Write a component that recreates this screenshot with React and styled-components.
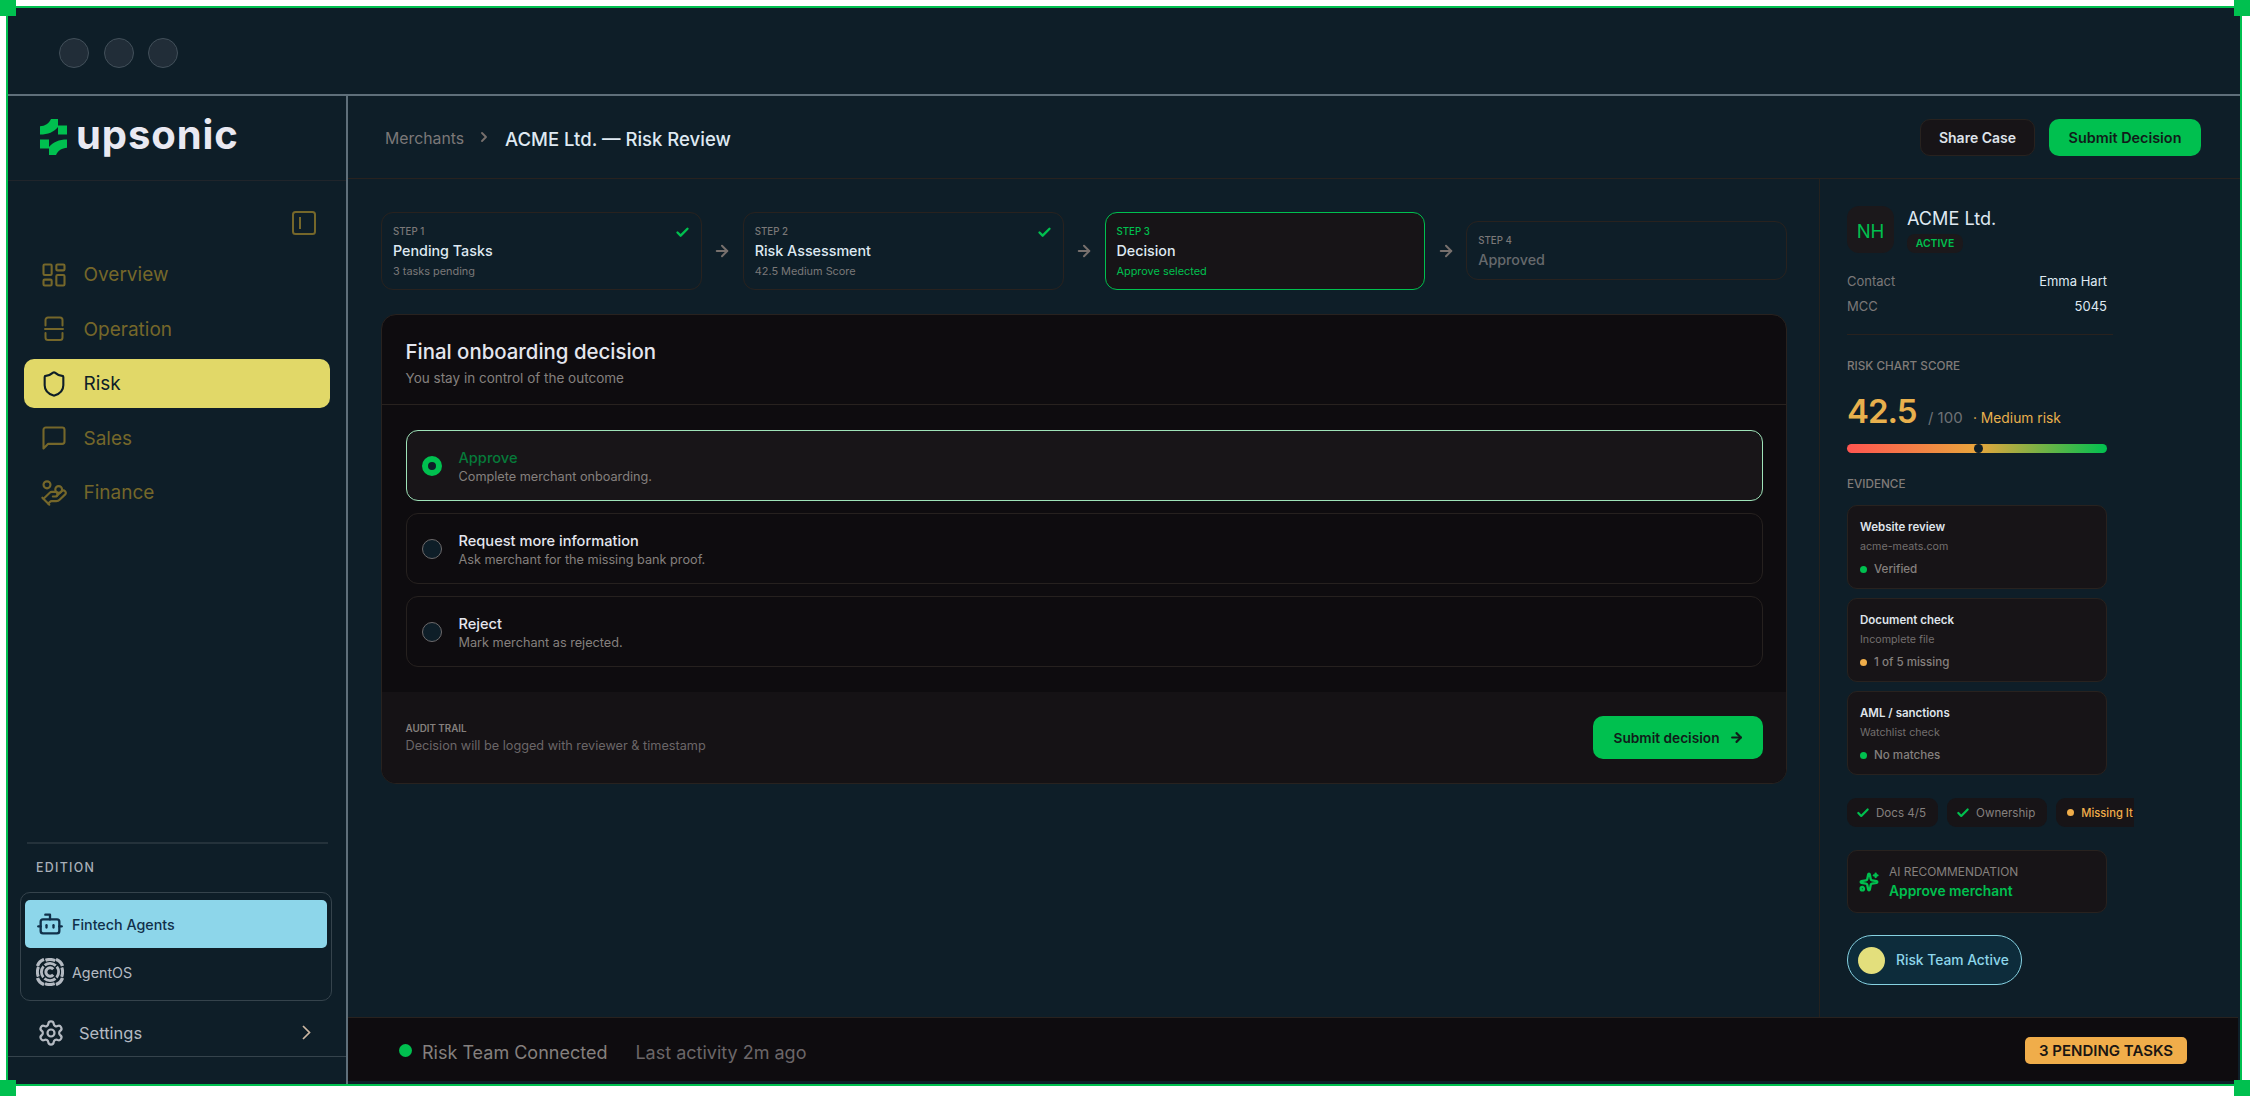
import React, { useState } from "react";
import styled, { createGlobalStyle, css } from "styled-components";
import {
  ArrowRight,
  Bot,
  Check,
  ChevronRight,
  HandCoins,
  LayoutDashboard,
  Settings,
  Shield,
  Sparkles,
} from "lucide-react";

const steps = [
  { label: "STEP 1", title: "Pending Tasks", note: "3 tasks pending", state: "done" },
  { label: "STEP 2", title: "Risk Assessment", note: "42.5 Medium Score", state: "done" },
  { label: "STEP 3", title: "Decision", note: "Approve selected", state: "active" },
  { label: "STEP 4", title: "Approved", state: "next" },
];

const options = [
  { id: "approve", title: "Approve", text: "Complete merchant onboarding." },
  { id: "request", title: "Request more information", text: "Ask merchant for the missing bank proof." },
  { id: "reject", title: "Reject", text: "Mark merchant as rejected." },
];

const evidence = [
  { title: "Website review", source: "acme-meats.com", status: "Verified", color: "#00c04f" },
  { title: "Document check", source: "Incomplete file", status: "1 of 5 missing", color: "#f0ad4a" },
  { title: "AML / sanctions", source: "Watchlist check", status: "No matches", color: "#00c04f" },
];

const OperationIcon = () => (
  <svg width="28" height="28" viewBox="0 0 28 28" fill="none" stroke="currentColor" strokeWidth="2" strokeLinecap="round">
    <path d="M5.5 10.5V5A2.5 2.5 0 0 1 8 2.500h12A2.5 2.5 0 0 1 22.5 5v5.5" />
    <path d="M5 14h18" />
    <path d="M5.5 18v4.500A2.5 2.5 0 0 0 8 25h12a2.5 2.5 0 0 0 2.5-2.5V18" />
  </svg>
);

const SalesIcon = () => (
  <svg width="28" height="28" viewBox="0 0 24 24" fill="none" stroke="currentColor" strokeWidth="1.8" strokeLinejoin="round">
    <path d="M21 15a2 2 0 0 1-2 2H7l-4 4V5a2 2 0 0 1 2-2h14a2 2 0 0 1 2 2z" />
  </svg>
);

// open ring in the middle, broken rings around it
const AgentOsIcon = () => (
  <svg width="28" height="28" viewBox="0 0 28 28" fill="none" stroke="currentColor">
    <path d="M17.2 11.2a4.2 4.2 0 1 0 0 5.600" strokeWidth="3" />
    <circle cx="14" cy="14" r="8.6" strokeWidth="2.8" strokeDasharray="12 1.510" strokeDashoffset="6" />
    <circle cx="14" cy="14" r="12.6" strokeWidth="3" strokeDasharray="10 9.790" strokeDashoffset="5" />
    <path d="M1.500 8C2.500 5 5 2.500 8 1.500M26.500 8C25.500 5 23 2.500 20 1.500M1.500 20c1 3 3.500 5.500 6.500 6.500M26.500 20c-1 3-3.500 5.500-6.500 6.500" strokeWidth="3.400" />
  </svg>
);

const navItems = [
  { name: "Overview", icon: <LayoutDashboard size={28} strokeWidth={1.8} /> },
  { name: "Operation", icon: <OperationIcon /> },
  { name: "Risk", icon: <Shield size={28} strokeWidth={1.8} /> },
  { name: "Sales", icon: <SalesIcon /> },
  { name: "Finance", icon: <HandCoins size={28} strokeWidth={1.8} /> },
];

const App = () => {
  const [page, setPage] = useState("Risk");
  const [choice, setChoice] = useState("approve");

  return (
    <>
      <GlobalStyle />
      <Page>
        <Frame>
          <WindowBar>
            <WindowDot />
            <WindowDot />
            <WindowDot />
          </WindowBar>

          <Body>
            <Sidebar>
              <Brand>
                <svg width="27" height="36" viewBox="0 0 27 36" fill="#00c04f">
                  <path d="M0 7.3C5 7 9 4.5 11 0h7v6.5h9v9h-9V8C14 13 8 15.5 0 15.5Z" />
                  <path d="M27 28.7C22 29 18 31.5 16 36H9v-6.5H0v-9h9V28c4-5 10-7.500 18-7.5Z" />
                </svg>
                <BrandName>upsonic</BrandName>
              </Brand>

              <Collapse>
                <svg width="24" height="24" viewBox="0 0 24 24" fill="none" stroke="currentColor" strokeWidth="2">
                  <rect x="1" y="1" width="22" height="22" rx="2.5" />
                  <path d="M8 6v12" />
                </svg>
              </Collapse>

              <Nav>
                {navItems.map((item) => (
                  <NavItem key={item.name} $active={item.name === page} onClick={() => setPage(item.name)}>
                    {item.icon}
                    {item.name}
                  </NavItem>
                ))}
              </Nav>

              <EditionTitle>EDITION</EditionTitle>
              <EditionBox>
                <EditionItem $active>
                  <Bot size={28} strokeWidth={2} />
                  Fintech Agents
                </EditionItem>
                <EditionItem>
                  <AgentOsIcon />
                  AgentOS
                </EditionItem>
              </EditionBox>

              <SettingsRow>
                <Settings size={28} strokeWidth={1.9} />
                <span>Settings</span>
                <svg width="9" height="15" viewBox="0 0 9 15" fill="none" stroke="#cdb7a2" strokeWidth="1.7">
                  <path d="M1 1l6.5 6.5L1 14" />
                </svg>
              </SettingsRow>
            </Sidebar>

            <Main>
              <Header>
                <Crumb>Merchants</Crumb>
                <ChevronRight size={16} strokeWidth={2.8} color="#77706d" />
                <PageTitle>ACME Ltd. — Risk Review</PageTitle>
                <ShareButton>Share Case</ShareButton>
                <SubmitButton>Submit Decision</SubmitButton>
              </Header>

              <Content>
                <Workspace>
                  <Steps>
                    {steps.map((step, i) => (
                      <React.Fragment key={step.label}>
                        {i > 0 && (
                          <StepArrow>
                            <ArrowRight size={18} strokeWidth={2.6} />
                          </StepArrow>
                        )}
                        <StepCard $state={step.state}>
                          <StepTop>
                            {step.label}
                            {step.state === "done" && <Check size={15} strokeWidth={3.8} color="#00c04f" />}
                          </StepTop>
                          <StepTitle>{step.title}</StepTitle>
                          {step.note && <StepNote>{step.note}</StepNote>}
                        </StepCard>
                      </React.Fragment>
                    ))}
                  </Steps>

                  <Panel>
                    <PanelHead>
                      <h2>Final onboarding decision</h2>
                      <p>You stay in control of the outcome</p>
                    </PanelHead>
                    <Options>
                      {options.map((option) => (
                        <Option key={option.id} $checked={option.id === choice} onClick={() => setChoice(option.id)}>
                          <Radio $checked={option.id === choice} />
                          <div>
                            <h3>{option.title}</h3>
                            <p>{option.text}</p>
                          </div>
                        </Option>
                      ))}
                    </Options>
                    <PanelFoot>
                      <div>
                        <h4>AUDIT TRAIL</h4>
                        <p>Decision will be logged with reviewer &amp; timestamp</p>
                      </div>
                      <PanelSubmit>
                        Submit decision
                        <ArrowRight size={15} strokeWidth={3.4} />
                      </PanelSubmit>
                    </PanelFoot>
                  </Panel>
                </Workspace>

                <Aside>
                  <Merchant>
                    <Avatar>NH</Avatar>
                    <div>
                      <h3>ACME Ltd.</h3>
                      <ActiveTag>ACTIVE</ActiveTag>
                    </div>
                  </Merchant>
                  <Fact>
                    <span>Contact</span>
                    <b>Emma Hart</b>
                  </Fact>
                  <Fact>
                    <span>MCC</span>
                    <b>5045</b>
                  </Fact>
                  <Rule />

                  <SectionLabel>RISK CHART SCORE</SectionLabel>
                  <Score>
                    <ScoreValue>42.5</ScoreValue>
                    <ScoreMax>/ 100</ScoreMax>
                    <ScoreLevel>· Medium risk</ScoreLevel>
                  </Score>
                  <ScoreBar>
                    <ScoreKnob />
                  </ScoreBar>

                  <SectionLabel>EVIDENCE</SectionLabel>
                  <EvidenceList>
                    {evidence.map((item) => (
                      <EvidenceCard key={item.title}>
                        <h4>{item.title}</h4>
                        <p>{item.source}</p>
                        <Status>
                          <Dot $color={item.color} />
                          {item.status}
                        </Status>
                      </EvidenceCard>
                    ))}
                  </EvidenceList>

                  <Chips>
                    <Chip>
                      <Check size={14} strokeWidth={3.8} color="#00c04f" />
                      Docs 4/5
                    </Chip>
                    <Chip>
                      <Check size={14} strokeWidth={3.8} color="#00c04f" />
                      Ownership
                    </Chip>
                    <Chip $warn>
                      <Dot $color="#f0ad4a" />
                      Missing It
                    </Chip>
                  </Chips>

                  <Recommendation>
                    <Sparkles size={20} strokeWidth={2.8} color="#00c04f" />
                    <div>
                      <h4>AI RECOMMENDATION</h4>
                      <p>Approve merchant</p>
                    </div>
                  </Recommendation>

                  <TeamPill>
                    <TeamDot />
                    Risk Team Active
                  </TeamPill>
                </Aside>
              </Content>

              <StatusBar>
                <Dot $color="#00c04f" $size={13} />
                <Connected>Risk Team Connected</Connected>
                <LastActivity>Last activity 2m ago</LastActivity>
                <PendingBadge>3 PENDING TASKS</PendingBadge>
              </StatusBar>
            </Main>
          </Body>
        </Frame>
        <Corner $top $left />
        <Corner $top />
        <Corner $left />
        <Corner />
      </Page>
    </>
  );
};

export default App;

const GlobalStyle = createGlobalStyle`
  * {
    box-sizing: border-box;
  }

  body {
    margin: 0;
    background: #fff;
    font-family: Inter, "Liberation Sans", sans-serif;
  }

  h2, h3, h4, p {
    margin: 0;
    font-weight: 400;
  }

  button {
    font-family: inherit;
    cursor: pointer;
  }

  svg {
    flex: none;
  }
`;

const Page = styled.div`
  position: relative;
  width: 2250px;
  height: 1096px;
  padding: 6px 8px 10px 6px;
  overflow: hidden;
`;

const Frame = styled.div`
  display: flex;
  flex-direction: column;
  height: 1080px;
  border: 2px solid #00c04f;
  background: #0e1e28;
  white-space: nowrap;
`;

const Corner = styled.i`
  position: absolute;
  width: 16px;
  height: 16px;
  background: #00c04f;
  ${({ $top }) => ($top ? "top: 0;" : "bottom: 0;")}
  ${({ $left }) => ($left ? "left: 0;" : "right: 0;")}
`;

const WindowBar = styled.div`
  display: flex;
  align-items: center;
  gap: 14.5px;
  height: 88px;
  padding: 4px 0 0 51px;
  border-bottom: 2px solid #5f6f7a;
`;

const WindowDot = styled.i`
  width: 30px;
  height: 30px;
  border: 1px solid #42505a;
  border-radius: 50%;
  background: #212d38;
`;

const Body = styled.div`
  display: flex;
  flex: 1;
`;

/* sidebar */

const Sidebar = styled.aside`
  display: flex;
  flex-direction: column;
  width: 340px;
  border-right: 2px solid #5f6f7a;
`;

const Brand = styled.div`
  display: flex;
  align-items: center;
  gap: 9px;
  height: 85px;
  padding: 0 0 3px 32px;
  border-bottom: 1px solid #20252b;
`;

const BrandName = styled.span`
  margin-top: -3px;
  font-size: 40px;
  font-weight: 700;
  line-height: 44px;
  letter-spacing: 0.9px;
  color: #e9e9f2;
`;

const Collapse = styled.div`
  display: flex;
  justify-content: flex-end;
  padding: 30px 30px 0 0;
  color: #75672a;
`;

const Nav = styled.nav`
  display: flex;
  flex-direction: column;
  gap: 5.6px;
  padding: 15px 16px 0;
`;

const NavItem = styled.a`
  display: flex;
  align-items: center;
  gap: 15.5px;
  height: 49px;
  padding-left: 16px;
  border-radius: 10px;
  font-size: 19px;
  color: ${({ $active }) => ($active ? "#0e1e28" : "#75672a")};
  background: ${({ $active }) => ($active ? "#e1d868" : "transparent")};
`;

const EditionTitle = styled.div`
  margin: auto 18px 0 19px;
  padding: 15px 0 0 9px;
  border-top: 2px solid #24323b;
  font-size: 12.4px;
  font-weight: 500;
  line-height: 17px;
  letter-spacing: 1.3px;
  color: #a9b0b8;
`;

const EditionBox = styled.div`
  margin: 16px 14px 0 12px;
  height: 109px;
  padding: 6.5px 4px 0;
  border: 1px solid #35434c;
  border-radius: 10px;
`;

const EditionItem = styled.div`
  display: flex;
  align-items: center;
  gap: 8px;
  height: 48px;
  padding: 1px 0 0 11px;
  border-radius: 5px;
  font-size: 14.3px;
  color: ${({ $active }) => ($active ? "#11304a" : "#b4bac2")};
  background: ${({ $active }) => ($active ? "#8dd6ea" : "transparent")};
  ${({ $active }) => $active && "font-weight: 500;"}
`;

const SettingsRow = styled.div`
  display: flex;
  align-items: center;
  height: 56px;
  margin-bottom: 27px;
  padding: 8px 35px 0 29px;
  border-bottom: 1px solid #35434c;
  font-size: 16.5px;
  color: #b4bac2;

  span {
    flex: 1;
    margin-left: 14px;
  }
`;

/* header */

const Main = styled.main`
  display: flex;
  flex-direction: column;
  flex: 1;
  padding-bottom: 3px;
`;

const Header = styled.header`
  display: flex;
  align-items: center;
  height: 83px;
  padding: 0 39px 0 37px;
  border-bottom: 1px solid #28221f;
`;

const Crumb = styled.span`
  margin: 2px 12px 0 0;
  font-size: 15.8px;
  color: #7b7878;
`;

const PageTitle = styled.h2`
  flex: 1;
  margin: 4px 0 0 13px;
  font-size: 18.5px;
  font-weight: 500;
  color: #dfe9f2;
`;

const ShareButton = styled.button`
  width: 115px;
  height: 37px;
  border: 1px solid #28221f;
  border-radius: 10px;
  background: #171417;
  font-size: 14px;
  font-weight: 600;
  color: #dfe3ea;
`;

const greenButton = css`
  border: none;
  border-radius: 10px;
  background: #00c04f;
  font-weight: 600;
  color: #101c1a;
`;

const SubmitButton = styled.button`
  ${greenButton}
  width: 152px;
  height: 37px;
  margin-left: 14px;
  font-size: 14.4px;
`;

/* workspace */

const Content = styled.div`
  display: flex;
  flex: 1;
`;

const Workspace = styled.section`
  flex: 1;
  padding: 33px 32px 0 33px;
`;

const Steps = styled.div`
  display: flex;
  align-items: center;
  height: 77px;
`;

const StepCard = styled.div`
  flex: 1;
  padding: 12px 11px 10.5px;
  border: 1px solid #28221f;
  border-radius: 12px;
  color: #7b7878;

  ${({ $state }) =>
    $state === "active" &&
    css`
      border-color: #00c04f;
      background: #171417;
      color: #00c04f;
    `}

  ${({ $state }) =>
    $state === "next" &&
    css`
      h3 {
        color: #66696c;
      }
    `}
`;

const StepTop = styled.div`
  display: flex;
  justify-content: space-between;
  height: 14px;
  font-size: 9.7px;
  font-weight: 500;
  line-height: 14px;
`;

const StepTitle = styled.h3`
  margin-top: 3px;
  font-size: 14.3px;
  font-weight: 500;
  line-height: 18px;
  color: #dfe9f2;
`;

const StepNote = styled.p`
  margin-top: 4.5px;
  font-size: 10.9px;
  line-height: 14px;
`;

const StepArrow = styled.div`
  display: flex;
  justify-content: center;
  width: 41px;
  color: #77706d;
`;

const Panel = styled.div`
  margin-top: 25px;
  border: 1px solid #28221f;
  border-radius: 15px;
  background: #0e0c0f;
  overflow: hidden;
`;

const PanelHead = styled.div`
  height: 90px;
  padding: 23px 23.5px 0;
  border-bottom: 1px solid #28221f;

  h2 {
    font-size: 20.4px;
    font-weight: 500;
    line-height: 28px;
    color: #e4e6ee;
  }

  p {
    margin-top: 3px;
    font-size: 13.5px;
    line-height: 18px;
    color: #85807e;
  }
`;

const Options = styled.div`
  display: flex;
  flex-direction: column;
  gap: 12px;
  padding: 25px 23.5px;
`;

const Option = styled.div`
  display: flex;
  align-items: center;
  gap: 17px;
  height: 71px;
  padding: 0 15px;
  border: 1px solid ${({ $checked }) => ($checked ? "#9fe3b9" : "#26211f")};
  border-radius: 12px;
  background: ${({ $checked }) => ($checked ? "#181518" : "transparent")};

  h3 {
    margin-top: 3px;
    font-size: 14.6px;
    font-weight: 500;
    line-height: 18px;
    color: ${({ $checked }) => ($checked ? "#067a3a" : "#e4e6ee")};
  }

  p {
    margin-top: 1px;
    font-size: 12.7px;
    line-height: 18px;
    color: #85807e;
  }
`;

const Radio = styled.i`
  width: 20px;
  height: 20px;
  border: ${({ $checked }) => ($checked ? "6px solid #00c04f" : "1.5px solid #6d6a6b")};
  border-radius: 50%;
  background: #0e1e28;
`;

const PanelFoot = styled.div`
  display: flex;
  align-items: center;
  justify-content: space-between;
  height: 91px;
  padding: 0 23.5px;
  background: #151215;

  h4 {
    margin-top: 1px;
    font-size: 9.8px;
    font-weight: 600;
    line-height: 14px;
    color: #85807e;
  }

  p {
    margin-top: 1px;
    font-size: 12.7px;
    line-height: 18px;
    color: #6b6668;
  }
`;

const PanelSubmit = styled.button`
  ${greenButton}
  display: flex;
  align-items: center;
  gap: 9px;
  width: 170px;
  height: 43px;
  padding: 0 0 0 21px;
  font-size: 13.7px;
`;

/* merchant details */

const Aside = styled.aside`
  width: 421px;
  padding: 27px 0 0 27px;
  border-left: 1px solid #24221f;
`;

const Merchant = styled.div`
  display: flex;
  gap: 13px;
  height: 63px;

  h3 {
    margin-bottom: 4px;
    font-size: 18.1px;
    line-height: 25px;
    color: #dfe9f2;
  }
`;

const Avatar = styled.div`
  width: 47px;
  height: 47px;
  padding-top: 2px;
  border-radius: 12px;
  background: #1b181b;
  font-size: 18.5px;
  line-height: 46px;
  text-align: center;
  color: #00c04f;
`;

const ActiveTag = styled.span`
  display: block;
  width: 56px;
  height: 19px;
  margin-top: -1px;
  border-radius: 8px;
  background: #1b181b;
  font-size: 10.4px;
  font-weight: 600;
  line-height: 19px;
  text-align: center;
  color: #00c04f;
`;

const Fact = styled.div`
  display: flex;
  justify-content: space-between;
  width: 260px;
  font-size: 13px;
  line-height: 25px;
  color: #7b7878;

  b {
    font-weight: 400;
    color: #dfe9f2;
  }
`;

const Rule = styled.div`
  width: 266px;
  margin: 15px 0 23px;
  border-top: 1px solid #28221f;
`;

const SectionLabel = styled.h4`
  font-size: 11.7px;
  font-weight: 500;
  line-height: 16px;
  color: #807b78;
`;

const Score = styled.div`
  display: flex;
  align-items: baseline;
  margin-top: 16px;
  height: 54px;
  line-height: 42px;
`;

const ScoreValue = styled.span`
  width: 81px;
  font-size: 33px;
  font-weight: 600;
  letter-spacing: -1px;
  color: #e8b04d;
`;

const ScoreMax = styled.span`
  width: 45px;
  font-size: 15px;
  color: #6f7276;
`;

const ScoreLevel = styled.span`
  font-size: 13.8px;
  color: #e8b04d;
`;

const ScoreBar = styled.div`
  display: flex;
  width: 260px;
  height: 9px;
  margin-bottom: 23px;
  padding-left: 127px;
  border-radius: 5px;
  background: linear-gradient(90deg, #ff5550, #e8a53c 50%, #00c04f);
`;

const ScoreKnob = styled.i`
  width: 9px;
  height: 9px;
  border-radius: 50%;
  background: #0e1e28;
`;

const EvidenceList = styled.div`
  display: flex;
  flex-direction: column;
  gap: 9px;
  margin-top: 13px;
`;

const EvidenceCard = styled.div`
  width: 260px;
  height: 84px;
  padding: 13px 12px;
  border: 1px solid #28221f;
  border-radius: 10px;
  background: #171417;

  h4 {
    font-size: 11.5px;
    font-weight: 600;
    line-height: 16px;
    color: #dfe3ea;
  }

  p {
    margin-top: 3px;
    font-size: 10.7px;
    line-height: 17px;
    color: #736f6e;
  }
`;

const Status = styled.div`
  display: flex;
  align-items: center;
  gap: 7px;
  margin-top: 6px;
  font-size: 11.6px;
  font-weight: 500;
  line-height: 16px;
  color: #85807e;
`;

const Dot = styled.i`
  width: ${({ $size = 7 }) => $size}px;
  height: ${({ $size = 7 }) => $size}px;
  flex: none;
  border-radius: 50%;
  background: ${({ $color }) => $color};
`;

const Chips = styled.div`
  display: flex;
  gap: 9px;
  width: 287px;
  margin-top: 23px;
  overflow: hidden;
`;

const Chip = styled.span`
  display: flex;
  flex: none;
  align-items: center;
  gap: 6px;
  height: 29px;
  padding: 0 12px 0 9px;
  border-radius: 9px;
  background: #171417;
  font-size: 11.6px;
  color: #85807e;

  /* runs off the end of the row */
  ${({ $warn }) =>
    $warn &&
    css`
      flex: 1;
      gap: 7px;
      padding: 0 0 0 11px;
      border-radius: 9px 0 0 9px;
      font-size: 11.2px;
      font-weight: 500;
      color: #f0ad4a;
    `}
`;

const Recommendation = styled.div`
  display: flex;
  align-items: center;
  gap: 10px;
  width: 260px;
  height: 63px;
  margin-top: 23px;
  padding-left: 11px;
  border: 1px solid #28221f;
  border-radius: 10px;
  background: #171417;

  h4 {
    font-size: 11.9px;
    line-height: 18px;
    color: #85807e;
  }

  p {
    font-size: 13.8px;
    font-weight: 600;
    line-height: 20px;
    color: #00c04f;
  }
`;

const TeamPill = styled.div`
  display: flex;
  align-items: center;
  gap: 11px;
  width: 175px;
  height: 50px;
  margin-top: 22px;
  padding-left: 10px;
  border: 1.5px solid #86d2e2;
  border-radius: 25px;
  background: #0d2c3b;
  font-size: 13.8px;
  font-weight: 500;
  color: #8dd6ea;
`;

const TeamDot = styled.i`
  width: 27px;
  height: 27px;
  border-radius: 50%;
  background: #e3df7c;
`;

/* status bar */

const StatusBar = styled.footer`
  display: flex;
  align-items: center;
  height: 64px;
  margin-right: 2px;
  padding: 2px 51px 0 51px;
  border-top: 1px solid #28221f;
  background: #0e0c0f;
  font-size: 18px;
`;

const Connected = styled.span`
  margin: 3px 28px 0 10px;
  color: #85807e;
`;

const LastActivity = styled.span`
  flex: 1;
  margin-top: 3px;
  color: #6b6668;
`;

const PendingBadge = styled.span`
  width: 162px;
  height: 27px;
  border-radius: 5px;
  background: #f0ad4a;
  font-size: 15px;
  font-weight: 600;
  line-height: 28px;
  text-align: center;
  color: #1a1613;
`;
